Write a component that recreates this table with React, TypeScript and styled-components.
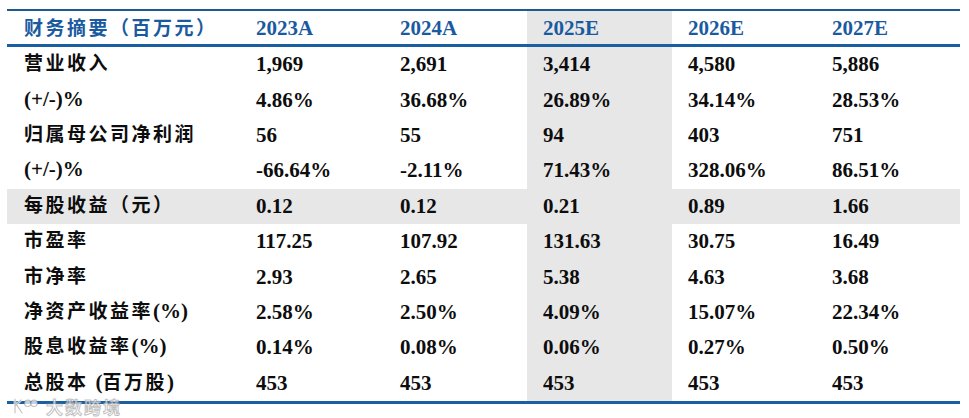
import React from "react";
import styled, { createGlobalStyle } from "styled-components";

const Global = createGlobalStyle`
  html, body { margin: 0; padding: 0; background: #ffffff; }
  body { width: 969px; height: 418px; overflow: hidden; }
`;

const Page = styled.div`
  position: relative;
  width: 969px;
  height: 418px;
  padding: 9px 0 0 7px;
  box-sizing: border-box;
`;

const Table = styled.div`
  width: 953px;
  border-top: 2px solid #1e5a8c;
  border-bottom: 3px solid #1a5fa2;
  display: flex;
  flex-direction: column;
`;

const Row = styled.div<{ $head?: boolean; $shade?: boolean }>`
  display: grid;
  grid-template-columns: 233px 144px 143px 145px 144px 144px;
  height: ${(p) => (p.$head ? "33px" : "35.4px")};
  background: ${(p) => (p.$shade ? "#e7e7e7" : "transparent")};
  border-bottom: ${(p) => (p.$head ? "3px solid #1a5fa2" : "none")};
`;

const Cell = styled.div<{ $hl?: boolean; $head?: boolean }>`
  display: flex;
  align-items: center;
  padding-left: 16px;
  padding-top: ${(p) => (p.$head ? "2px" : "0")};
  box-sizing: border-box;
  background: ${(p) => (p.$hl ? "#e7e7e7" : "transparent")};
  font-family: "Liberation Serif", "Times New Roman", serif;
  font-weight: 700;
  font-size: 21px;
  line-height: 1;
  color: ${(p) => (p.$head ? "#1a5aa0" : "#0d0d0d")};
  white-space: nowrap;
`;

const Label = styled.div<{ $head?: boolean }>`
  display: flex;
  align-items: center;
  padding-left: 17px;
  padding-top: ${(p) => (p.$head ? "2px" : "0")};
  padding-bottom: ${(p) => (p.$head ? "0" : "2px")};
  box-sizing: border-box;
  font-family: "Liberation Serif", "Noto Sans CJK SC", serif;
  font-weight: 700;
  font-size: 19px;
  line-height: 1;
  letter-spacing: 2.5px;
  color: ${(p) => (p.$head ? "#1a5aa0" : "#0d0d0d")};
  white-space: nowrap;
`;

const Latin = styled.span<{ $gap?: number }>`
  font-family: "Liberation Serif", "Times New Roman", serif;
  font-size: 21px;
  line-height: 1;
  letter-spacing: 0;
  margin-left: ${(p) => (p.$gap ? `${p.$gap}px` : "0")};
`;

const Watermark = styled.div`
  position: absolute;
  left: 10px;
  top: 396px;
  display: flex;
  align-items: center;
  gap: 6px;
  opacity: 0.9;
`;

const WmText = styled.span`
  font-family: "Noto Sans CJK SC", sans-serif;
  font-weight: 700;
  font-size: 17px;
  line-height: 1;
  color: rgba(255, 255, 255, 0.8);
  -webkit-text-stroke: 1px rgba(140, 140, 140, 0.6);
  letter-spacing: 2px;
`;

type Part = { t: string; latin?: boolean; gap?: number };

const rows: { label: Part[]; vals: string[]; shade?: boolean }[] = [
  { label: [{ t: "营业收入" }], vals: ["1,969", "2,691", "3,414", "4,580", "5,886"] },
  { label: [{ t: "(+/-)%", latin: true }], vals: ["4.86%", "36.68%", "26.89%", "34.14%", "28.53%"] },
  { label: [{ t: "归属母公司净利润" }], vals: ["56", "55", "94", "403", "751"] },
  { label: [{ t: "(+/-)%", latin: true }], vals: ["-66.64%", "-2.11%", "71.43%", "328.06%", "86.51%"] },
  { label: [{ t: "每股收益（元）" }], vals: ["0.12", "0.12", "0.21", "0.89", "1.66"], shade: true },
  { label: [{ t: "市盈率" }], vals: ["117.25", "107.92", "131.63", "30.75", "16.49"] },
  { label: [{ t: "市净率" }], vals: ["2.93", "2.65", "5.38", "4.63", "3.68"] },
  { label: [{ t: "净资产收益率" }, { t: "(%)", latin: true }], vals: ["2.58%", "2.50%", "4.09%", "15.07%", "22.34%"] },
  { label: [{ t: "股息收益率" }, { t: "(%)", latin: true }], vals: ["0.14%", "0.08%", "0.06%", "0.27%", "0.50%"] },
  { label: [{ t: "总股本" }, { t: "(", latin: true, gap: 7 }, { t: "百万股" }, { t: ")", latin: true }], vals: ["453", "453", "453", "453", "453"] },
];

const heads = ["2023A", "2024A", "2025E", "2026E", "2027E"];

export default function App() {
  return (
    <Page>
      <Global />
      <Table>
        <Row $head>
          <Label $head>财务摘要（百万元）</Label>
          {heads.map((h, i) => (
            <Cell key={h} $head $hl={i === 2}>
              {h}
            </Cell>
          ))}
        </Row>
        {rows.map((r, ri) => (
          <Row key={ri} $shade={r.shade}>
            <Label>
              {r.label.map((p, pi) =>
                p.latin ? (
                  <Latin key={pi} $gap={p.gap}>
                    {p.t}
                  </Latin>
                ) : (
                  <span key={pi}>{p.t}</span>
                )
              )}
            </Label>
            {r.vals.map((v, i) => (
              <Cell key={i} $hl={i === 2}>
                {v}
              </Cell>
            ))}
          </Row>
        ))}
      </Table>
      <Watermark>
        <svg width="30" height="20" viewBox="0 0 30 22">
          <g fill="none" stroke="rgba(140,140,140,0.6)" strokeWidth="1.2">
            <path d="M4 3 L4 19 M4 11 L11 4 M6 10 L12 19" stroke="rgba(255,255,255,0.9)" strokeWidth="3" />
            <path d="M4 3 L4 19 M4 11 L11 4 M6 10 L12 19" />
            <circle cx="18" cy="8" r="3.5" fill="rgba(255,255,255,0.8)" />
            <circle cx="25" cy="8" r="3.5" fill="rgba(255,255,255,0.8)" />
          </g>
        </svg>
        <WmText>大数跨境</WmText>
      </Watermark>
    </Page>
  );
}
